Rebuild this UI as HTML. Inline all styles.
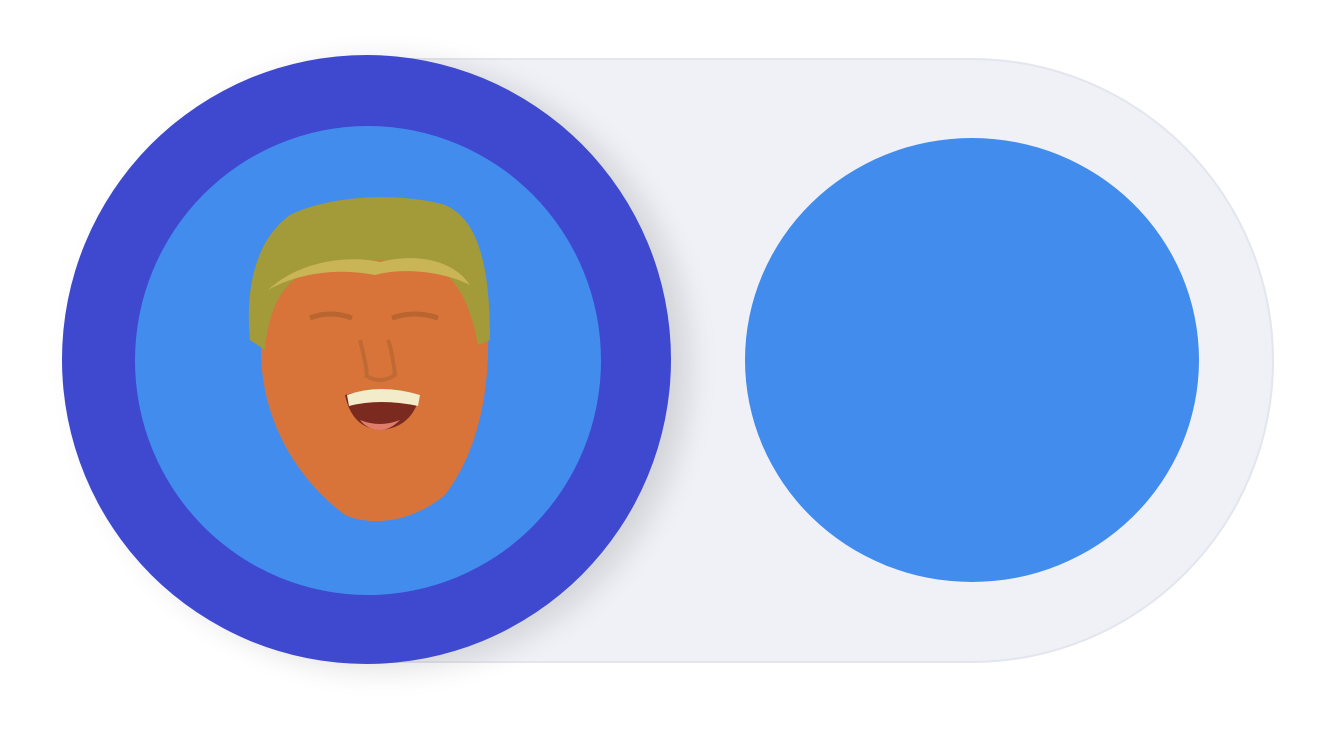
<!DOCTYPE html>
<html><head><meta charset="utf-8"><style>
html,body{margin:0;padding:0;background:#fff;width:1334px;height:750px;overflow:hidden;position:relative}
.pill{position:absolute;left:62px;top:58px;width:1212px;height:605px;border-radius:303px;background:#eff1f6;box-shadow:inset 0 0 0 2px #e3e6ee}
.outer{position:absolute;left:62px;top:55px;width:609px;height:609px;border-radius:50%;background:#3e49cf;box-shadow:18px 6px 30px rgba(0,0,0,0.12)}
.inner{position:absolute;left:135px;top:126px;width:466px;height:469px;border-radius:50%;background:#428cee}
.right{position:absolute;left:745px;top:138px;width:454px;height:444px;border-radius:50%;background:#428cee}
svg{position:absolute;left:0;top:0}
</style></head><body>
<div class="pill"></div>
<div class="outer"></div>
<div class="inner"></div>
<div class="right"></div>
<svg width="1334" height="750">
<path d="M262 330 C255 400 285 470 345 515 C375 528 415 520 445 495 C475 455 490 400 488 330 C480 280 440 255 375 255 C310 255 268 280 262 330Z" fill="#d8743a"/>
<path d="M250 340 C245 290 255 240 290 215 C330 195 400 192 445 205 C480 220 490 270 490 340 L478 345 C470 300 455 280 440 270 C400 255 340 258 300 275 C278 290 268 315 265 350Z" fill="#a39a3a"/>
<path d="M268 290 C300 260 350 255 380 262 C420 252 455 262 470 285 C440 270 400 268 375 275 C340 268 300 272 268 290Z" fill="#c9b456"/>
<path d="M310 318 Q330 310 352 318" stroke="#b8652f" stroke-width="5" fill="none"/>
<path d="M392 318 Q415 310 438 318" stroke="#b8652f" stroke-width="5" fill="none"/>
<path d="M345 395 Q380 385 420 395 Q412 428 380 430 Q352 428 345 395Z" fill="#7a2a1e"/>
<path d="M347 395 Q380 383 420 395 L418 406 Q380 398 349 406Z" fill="#f2eccb"/>
<path d="M360 420 Q380 428 400 420 Q390 430 380 430 Q368 430 360 420Z" fill="#e07d6a"/>
<path d="M360 340 Q370 380 365 375 Q380 385 395 375 Q392 350 388 340" stroke="#c06a33" stroke-width="4" fill="none"/>
</svg>
</body></html>
